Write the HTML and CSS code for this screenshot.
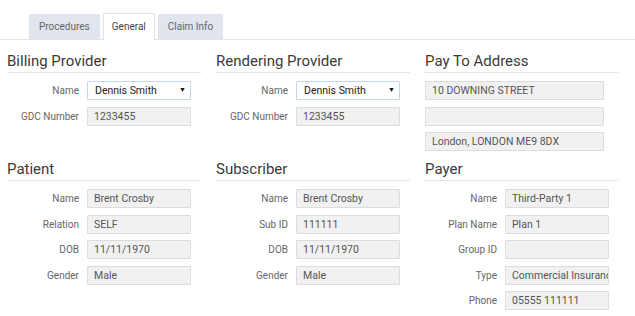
FILE: index.html
```html
<!DOCTYPE html>
<html>
<head>
<meta charset="utf-8">
<link rel="stylesheet" href="styles.css">
</head>
<body>
<div class="tabs">
  <div class="tab">Procedures</div>
  <div class="tab active">General</div>
  <div class="tab">Claim Info</div>
</div>
<div class="grid">
  <section class="sec">
    <h2 class="title">Billing Provider</h2>
    <div class="row"><span class="lbl">Name</span><div class="sel">Dennis Smith<span class="arrow">▼</span></div></div>
    <div class="row"><span class="lbl">GDC Number</span><div class="fld">1233455</div></div>
  </section>
  <section class="sec">
    <h2 class="title">Rendering Provider</h2>
    <div class="row"><span class="lbl">Name</span><div class="sel">Dennis Smith<span class="arrow">▼</span></div></div>
    <div class="row"><span class="lbl">GDC Number</span><div class="fld">1233455</div></div>
  </section>
  <section class="sec">
    <h2 class="title">Pay To Address</h2>
    <div class="row"><div class="fld wide">10 DOWNING STREET</div></div>
    <div class="row"><div class="fld wide"></div></div>
    <div class="row"><div class="fld wide">London, LONDON ME9 8DX</div></div>
  </section>
  <section class="sec">
    <h2 class="title">Patient</h2>
    <div class="row"><span class="lbl">Name</span><div class="fld">Brent Crosby</div></div>
    <div class="row"><span class="lbl">Relation</span><div class="fld">SELF</div></div>
    <div class="row"><span class="lbl">DOB</span><div class="fld">11/11/1970</div></div>
    <div class="row"><span class="lbl">Gender</span><div class="fld">Male</div></div>
  </section>
  <section class="sec">
    <h2 class="title">Subscriber</h2>
    <div class="row"><span class="lbl">Name</span><div class="fld">Brent Crosby</div></div>
    <div class="row"><span class="lbl">Sub ID</span><div class="fld">111111</div></div>
    <div class="row"><span class="lbl">DOB</span><div class="fld">11/11/1970</div></div>
    <div class="row"><span class="lbl">Gender</span><div class="fld">Male</div></div>
  </section>
  <section class="sec">
    <h2 class="title">Payer</h2>
    <div class="row"><span class="lbl">Name</span><div class="fld">Third-Party 1</div></div>
    <div class="row"><span class="lbl">Plan Name</span><div class="fld">Plan 1</div></div>
    <div class="row"><span class="lbl">Group ID</span><div class="fld"></div></div>
    <div class="row"><span class="lbl">Type</span><div class="fld">Commercial Insurance</div></div>
    <div class="row"><span class="lbl">Phone</span><div class="fld">05555 111111</div></div>
  </section>
</div>
</body>
</html>
```
FILE: styles.css
```css
html, body {
  margin: 0;
  padding: 0;
  background: #fff;
  font-family: Roboto, "Liberation Sans", sans-serif;
  color: #555;
}
.tabs {
  display: flex;
  align-items: flex-end;
  gap: 3px;
  padding: 13px 0 0 29px;
  border-bottom: 1px solid #e3e3e3;
  height: 26px;
  box-sizing: content-box;
}
.tab {
  height: 25px;
  line-height: 25px;
  padding: 0 10px;
  font-size: 10px;
  color: #666;
  background: #e1e5ee;
  box-sizing: border-box;
}
.tab.active {
  background: #fff;
  height: 27px;
  line-height: 26px;
  padding: 0 8px;
  margin-bottom: -1px;
  border: 1px solid #e3e3e3;
  border-bottom: none;
  color: #444;
}
.grid {
  display: grid;
  grid-template-columns: 194px 194px 194px;
  column-gap: 15px;
  row-gap: 8px;
  padding: 11px 0 0 7px;
}
.sec {
  display: flex;
  flex-direction: column;
  gap: 6.5px;
}
.title {
  margin: 0 0 1.5px;
  font-size: 15px;
  font-weight: 400;
  line-height: 20px;
  padding-bottom: 1px;
  color: #3a3a3a;
  border-bottom: 1px solid #e6e6e6;
}
.row {
  display: flex;
  align-items: center;
  height: 19px;
}
.lbl {
  width: 72px;
  margin-right: 8px;
  text-align: right;
  font-size: 10px;
  color: #666;
  white-space: nowrap;
}
.fld, .sel {
  width: 104px;
  height: 19px;
  box-sizing: border-box;
  border: 1px solid #dcdcdc;
  background: #f1f1f1;
  font-size: 10.5px;
  line-height: 17px;
  padding: 0 0 0 6px;
  color: #555;
  white-space: nowrap;
  overflow: hidden;
  border-radius: 1px;
}
.fld.wide {
  width: 179px;
}
.sel {
  background: #fff;
  border-color: #c6d6e6;
  color: #222;
  display: flex;
  justify-content: space-between;
  padding: 0 4px 0 7px;
}
.arrow {
  font-size: 7px;
  color: #111;
}
```
